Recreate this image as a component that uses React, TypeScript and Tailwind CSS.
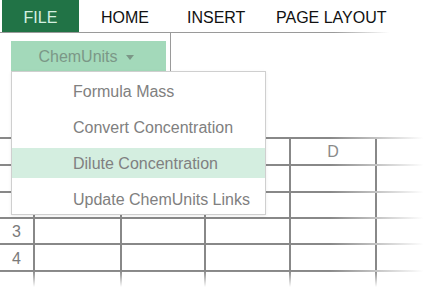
import React from 'react';

const tabs = [
  { label: 'HOME', w: 'w-[86px]' },
  { label: 'INSERT', w: 'w-[89px]' },
  { label: 'PAGE LAYOUT', w: 'w-[140px]' },
];

const menuItems = ['Formula Mass', 'Convert Concentration', 'Dilute Concentration', 'Update ChemUnits Links'];

// row content heights between the 2px grid lines
const rows = [
  { h: 'h-[25px]', label: '', head: true },
  { h: 'h-[25px]', label: '' },
  { h: 'h-[24px]', label: '' },
  { h: 'h-[24px]', label: '3' },
  { h: 'h-[25px]', label: '4' },
  { h: 'h-[20px]', label: '' },
];

const HLine = () => (
  <div className="h-[2px] w-full bg-[linear-gradient(to_right,#888_0%,#888_77%,rgba(136,136,136,0)_99%)]" />
);

const Row: React.FC<{ h: string; label: string; head?: boolean }> = ({ h, label, head }) => (
  <div className={`flex ${h}`}>
    <div className="w-[33px] shrink-0 flex items-center justify-center pt-[2px] text-[16px] text-[#7a7a7a]">{label}</div>
    <div className="w-[87px] shrink-0 border-l-2 border-[#888]" />
    <div className="w-[84px] shrink-0 border-l-2 border-[#888]" />
    <div className="w-[85px] shrink-0 border-l-2 border-[#888]" />
    <div className="w-[86px] shrink-0 border-l-2 border-[#888] flex items-center justify-center text-[16px] text-[#8a8a8a]">
      {head ? 'D' : ''}
    </div>
    <div className="flex-1 border-l-2 border-[#888]" />
  </div>
);

export default function App() {
  return (
    <div className="relative w-[428px] h-[287px] overflow-hidden bg-white font-['Liberation_Sans',Arial,sans-serif]">
      {/* tab bar */}
      <div className="flex h-[32px] items-stretch">
        <div className="ml-[2px] w-[77px] bg-[#217346] text-[#d4f0e0] text-[16px] flex items-center justify-center pt-[3px]">
          FILE
        </div>
        <div className="ml-[22px] flex">
          {tabs.map(t => (
            <div key={t.label} className={`${t.w} text-[16px] text-[#111] flex items-center pt-[3px]`}>
              {t.label}
            </div>
          ))}
        </div>
      </div>
      <div className="h-px w-full bg-[linear-gradient(to_right,#9a9a9a_0%,#9a9a9a_78%,rgba(154,154,154,0)_91%)]" />

      {/* ribbon */}
      <div className="h-[104px]">
        <div className="w-[171px] h-[38px] border-r border-[#9a9a9a] pl-[11px] pt-[8px]">
          <div className="w-[155px] h-[30px] bg-[#a3d9ba] flex items-center justify-center gap-[8px] pr-[5px] pt-[1px] text-[16px] text-[#7b9787]">
            <span>ChemUnits</span>
            <svg width="8" height="5" viewBox="0 0 8 5" className="mt-[2px]">
              <path d="M0 0 L8 0 L4 5 Z" fill="#7b9787" />
            </svg>
          </div>
        </div>
      </div>

      {/* grid */}
      <div>
        {rows.map((r, i) => (
          <div key={i}>
            <HLine />
            <Row h={r.h} label={r.label} head={r.head} />
          </div>
        ))}
      </div>

      {/* bottom fade */}
      <div className="absolute left-0 right-0 bottom-0 h-[16px] bg-gradient-to-b from-white/0 to-white" />

      {/* dropdown menu */}
      <div className="absolute left-[11px] top-[71px] w-[255px] h-[144px] bg-white border border-[#cfcfcf] shadow-[0_1px_3px_rgba(0,0,0,0.08)] pt-[5px] flex flex-col gap-[5.7px]">
        {menuItems.map((m, i) => (
          <div
            key={m}
            className={`h-[30px] flex items-center pl-[61px] pt-[1px] text-[16px] text-[#808080] ${i === 2 ? 'bg-[#d4eee0]' : ''}`}
          >
            {m}
          </div>
        ))}
      </div>
    </div>
  );
}
